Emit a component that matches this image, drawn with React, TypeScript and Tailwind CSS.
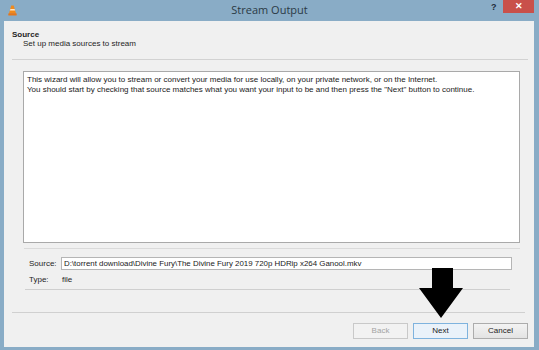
import React from "react";

const ui = "font-['Liberation_Sans',Arial,sans-serif]";

function VlcIcon() {
  return (
    <svg width="9" height="11" viewBox="0 0 9 11">
      <path d="M3.3 0.5h2.4l2.3 8H1z" fill="#f08a1c" />
      <path d="M2.4 4h4.2l0.5 1.6H1.9z" fill="#fde7c8" />
      <rect x="0.3" y="8.3" width="8.4" height="2.2" rx="0.6" fill="#e4761b" />
    </svg>
  );
}

function DownArrow() {
  return (
    <svg width="44" height="51" viewBox="0 0 44 51" className="absolute left-[419px] top-[268px]">
      <path d="M13 0h21v20h10L22 50 0 20h13z" fill="#000" />
    </svg>
  );
}

function Button({ label, variant }: { label: string; variant?: "default" | "disabled" }) {
  const tone =
    variant === "default"
      ? "border-[#7fb3de] bg-[#eaf2fa] text-[#222]"
      : variant === "disabled"
        ? "border-[#c9c9c9] bg-[#f2f2f2] text-[#a3a3a3]"
        : "border-[#acacac] bg-gradient-to-b from-[#f3f3f3] to-[#e3e3e3] text-[#222]";
  return (
    <div className={`flex h-[16px] w-[55px] items-center justify-center border text-[8px] ${tone}`}>
      {label}
    </div>
  );
}

export default function App() {
  return (
    <div className={`relative flex h-[350px] w-[539px] flex-col bg-[#89acc6] ${ui}`}>
      <div className="relative flex h-[21px] items-center justify-center">
        <div className="absolute left-[8px] top-[5px]">
          <VlcIcon />
        </div>
        <span className="font-['Open_Sans',sans-serif] text-[11px] text-[#2b3a45]">Stream Output</span>
        <span className="absolute left-[491px] top-[1px] text-[9px] font-bold text-[#1d2b3a]">?</span>
        <div className="absolute left-[503px] top-0 flex h-[13px] w-[31px] items-center justify-center bg-[#c9504a] text-[9px] font-bold text-white">
          ✕
        </div>
      </div>

      <div className="mb-[3px] ml-[4px] mr-[5px] flex flex-1 flex-col bg-[#f0f0f0] text-[#1e1e1e]">
        <div className="pl-[8px] pt-[9px] text-[8px] leading-[9px]">
          <p className="font-bold">Source</p>
          <p className="pl-[11px]">Set up media sources to stream</p>
        </div>
        <div className="ml-[8px] mr-[6px] mt-[11px] h-px bg-[#d2d2d2]" />

        <div className="ml-[19px] mr-[14px] mt-[11px] h-[172px] border border-[#a9a9a9] bg-white px-[3px] pt-[3px] text-[8px] leading-[10px] text-[#1a1a1a]">
          <p>This wizard will allow you to stream or convert your media for use locally, on your private network, or on the Internet.</p>
          <p>You should start by checking that source matches what you want your input to be and then press the "Next" button to continue.</p>
        </div>
        <div className="ml-[20px] mr-[14px] mt-[5px] h-px bg-[#dadada]" />

        <div className="ml-[25px] mr-[22px] mt-[8px] flex items-center text-[8px]">
          <span className="w-[32px]">Source:</span>
          <div className="flex h-[13px] flex-1 items-center border border-[#b5b5b5] bg-white px-[2px] text-[7.9px] text-[#1a1a1a]">
            D:\torrent download\Divine Fury\The Divine Fury 2019 720p HDRip x264 Ganool.mkv
          </div>
        </div>
        <div className="ml-[25px] mt-[4px] flex items-center text-[8px]">
          <span className="w-[33px]">Type:</span>
          <span>file</span>
        </div>
        <div className="ml-[21px] mr-[24px] mt-[3px] h-px bg-[#cfcfcf]" />
        <div className="ml-[8px] mr-[9px] mt-[22px] h-px bg-[#d0d0d0]" />

        <div className="mr-[6px] mt-[10px] flex justify-end gap-[5px]">
          <Button label="Back" variant="disabled" />
          <Button label="Next" variant="default" />
          <Button label="Cancel" />
        </div>
      </div>

      <DownArrow />
    </div>
  );
}
